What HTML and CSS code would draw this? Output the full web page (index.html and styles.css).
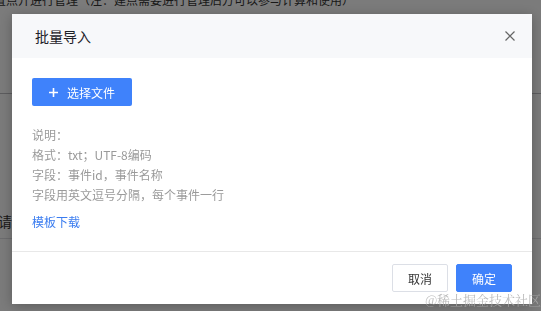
FILE: index.html
```html
<!DOCTYPE html>
<html lang="zh-CN">
<head>
    <meta charset="UTF-8">
    <meta name="viewport" content="width=device-width, initial-scale=1.0">
    <title>批量导入</title>
    <link rel="stylesheet" href="styles.css">
</head>
<body>
    <!-- page under the mask -->
    <div class="page">
        <div class="tip">置点开进行管理（注：建点需要进行管理后方可以参与计算和使用）</div>
        <div class="bar"></div>
        <div class="field">请</div>
    </div>

    <!-- mask + dialog -->
    <div class="mask">
        <div class="dialog">
            <div class="dialog-header">
                <span class="dialog-title">批量导入</span>
                <svg class="close" width="10" height="10" viewBox="0 0 10 10">
                    <path d="M0.5 0.5 L9.5 9.5 M9.5 0.5 L0.5 9.5" stroke="#666" stroke-width="1.2" fill="none"/>
                </svg>
            </div>
            <div class="dialog-body">
                <button class="btn-upload">
                    <svg width="9" height="9" viewBox="0 0 9 9">
                        <path d="M4.5 0 V9 M0 4.5 H9" stroke="#fff" stroke-width="1.6" fill="none"/>
                    </svg>
                    <span>选择文件</span>
                </button>
                <div class="notes">
                    <div>说明：</div>
                    <div>格式：txt；UTF-8编码</div>
                    <div>字段：事件id，事件名称</div>
                    <div>字段用英文逗号分隔，每个事件一行</div>
                </div>
                <a class="download" href="#">模板下载</a>
            </div>
            <div class="dialog-footer">
                <button class="btn">取消</button>
                <button class="btn btn-primary">确定</button>
            </div>
        </div>
        <div class="watermark">@稀土掘金技术社区</div>
    </div>
</body>
</html>
```

FILE: styles.css
```css
/* base */
body {
    margin: 0;
    background: #f6f6f6;
    font-family: "Noto Sans CJK SC", "Noto Sans", sans-serif;
    overflow: hidden;
    height: 311px;
}

/* page content behind the mask */
.page {
    color: #333;
}

.tip {
    margin-top: -9px;
    margin-left: -6px;
    font-size: 12px;
    line-height: 18px;
    white-space: nowrap;
}

.bar {
    height: 84px;
    border-bottom: 1px solid #b9b9bd;
}

.field {
    margin-top: 116px;
    margin-left: -2px;
    font-size: 14px;
    line-height: 22px;
    padding-bottom: 6px;
    border-bottom: 1px solid #d8d8dc;
}

/* mask */
.mask {
    position: fixed;
    inset: 0;
    background: rgba(0, 0, 0, 0.5);
    padding: 14px 9px 0 12px;
}

.dialog {
    background: #fff;
    box-shadow: 0 2px 12px rgba(0, 0, 0, 0.25);
    display: flex;
    flex-direction: column;
}

.dialog-header {
    height: 44px;
    background: #f7f8fa;
    display: flex;
    align-items: center;
    justify-content: space-between;
    padding: 0 17px 0 23px;
}

.dialog-title {
    font-size: 14px;
    color: #1d2129;
}

.dialog-body {
    padding: 20px 20px 19px;
    display: flex;
    flex-direction: column;
    align-items: flex-start;
}

.btn-upload {
    width: 100px;
    height: 28px;
    border: none;
    border-radius: 2px;
    background: #3f82fb;
    color: #fff;
    font-family: inherit;
    font-size: 12px;
    display: flex;
    align-items: center;
    justify-content: center;
    gap: 9px;
    padding: 0;
}

.notes {
    margin-top: 19px;
    font-size: 12px;
    line-height: 20px;
    color: #9a9a9a;
}

.download {
    margin-top: 7px;
    font-size: 12px;
    line-height: 20px;
    color: #3a7cf0;
    text-decoration: none;
}

.dialog-footer {
    border-top: 1px solid #e8e8e8;
    padding: 12px 20px;
    display: flex;
    justify-content: flex-end;
    gap: 8px;
}

.btn {
    width: 56px;
    height: 28px;
    border: 1px solid #dcdfe6;
    border-radius: 2px;
    background: #fff;
    color: #333;
    font-family: inherit;
    font-size: 12px;
    padding: 0;
}

.btn-primary {
    border-color: #3f82fb;
    background: #3f82fb;
    color: #fff;
}

.watermark {
    position: absolute;
    right: 0;
    bottom: 3px;
    font-size: 13px;
    line-height: 16px;
    color: rgba(170, 170, 170, 0.8);
    font-family: "Noto Serif CJK SC", "Noto Sans CJK SC", serif;
}
```
